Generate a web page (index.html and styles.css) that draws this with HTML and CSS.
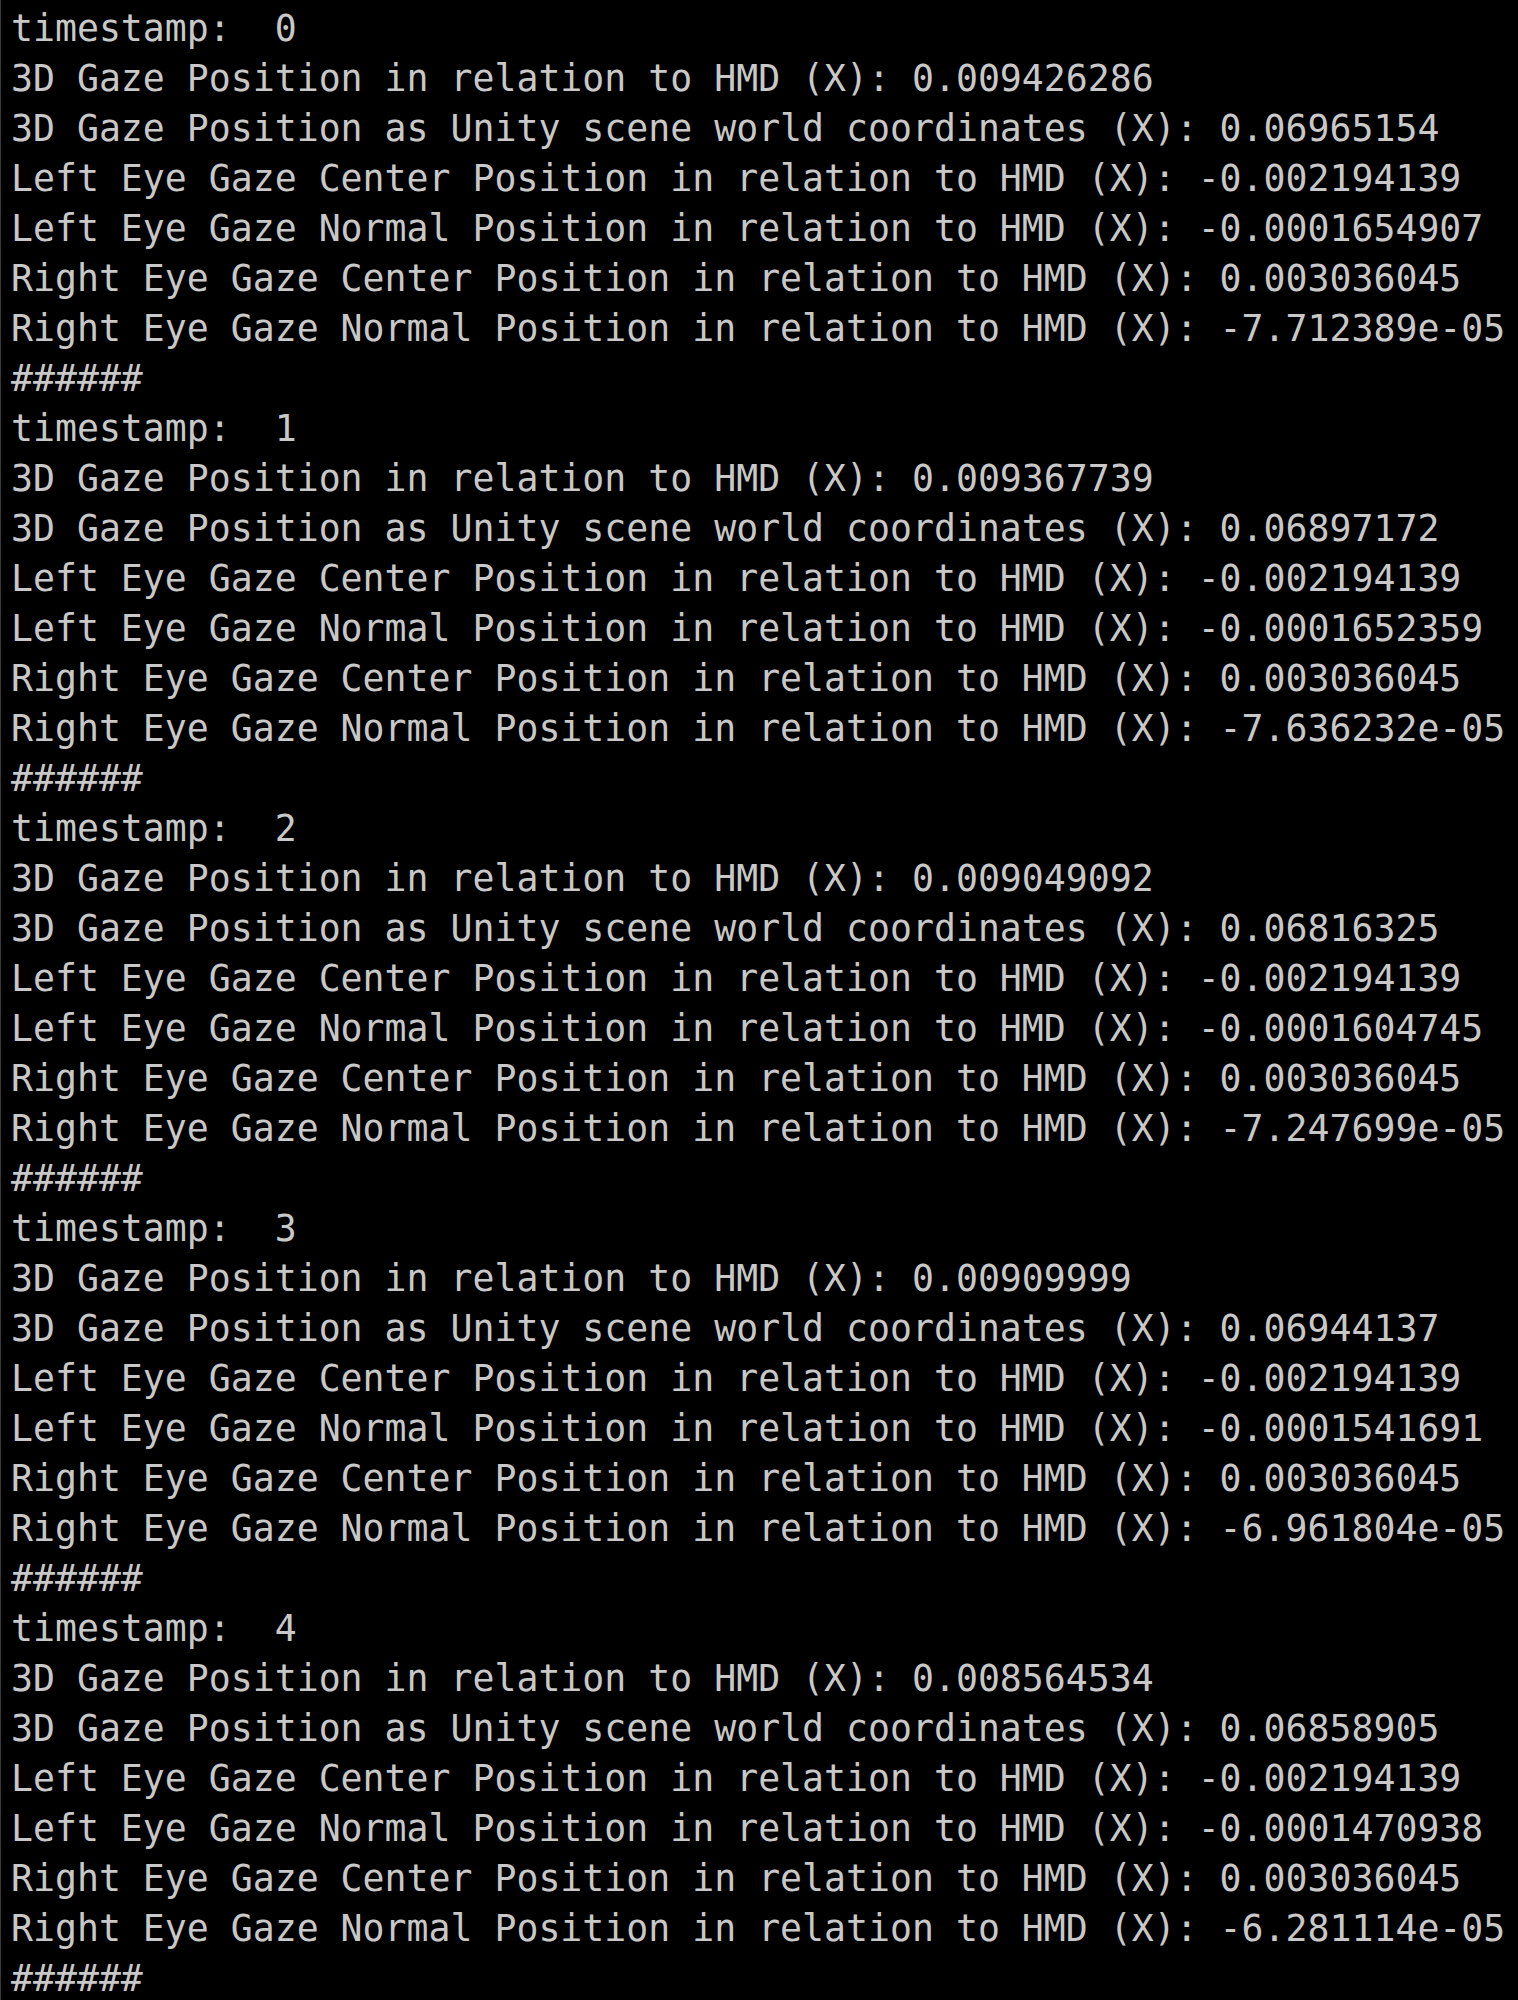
FILE: index.html
```html
<!DOCTYPE html>
<html>
<head>
<meta charset="utf-8">
<link rel="stylesheet" href="styles.css">
</head>
<body>
<div class="term">
<pre class="log">timestamp:  0
3D Gaze Position in relation to HMD (X): 0.009426286
3D Gaze Position as Unity scene world coordinates (X): 0.06965154
Left Eye Gaze Center Position in relation to HMD (X): -0.002194139
Left Eye Gaze Normal Position in relation to HMD (X): -0.0001654907
Right Eye Gaze Center Position in relation to HMD (X): 0.003036045
Right Eye Gaze Normal Position in relation to HMD (X): -7.712389e-05
######
timestamp:  1
3D Gaze Position in relation to HMD (X): 0.009367739
3D Gaze Position as Unity scene world coordinates (X): 0.06897172
Left Eye Gaze Center Position in relation to HMD (X): -0.002194139
Left Eye Gaze Normal Position in relation to HMD (X): -0.0001652359
Right Eye Gaze Center Position in relation to HMD (X): 0.003036045
Right Eye Gaze Normal Position in relation to HMD (X): -7.636232e-05
######
timestamp:  2
3D Gaze Position in relation to HMD (X): 0.009049092
3D Gaze Position as Unity scene world coordinates (X): 0.06816325
Left Eye Gaze Center Position in relation to HMD (X): -0.002194139
Left Eye Gaze Normal Position in relation to HMD (X): -0.0001604745
Right Eye Gaze Center Position in relation to HMD (X): 0.003036045
Right Eye Gaze Normal Position in relation to HMD (X): -7.247699e-05
######
timestamp:  3
3D Gaze Position in relation to HMD (X): 0.00909999
3D Gaze Position as Unity scene world coordinates (X): 0.06944137
Left Eye Gaze Center Position in relation to HMD (X): -0.002194139
Left Eye Gaze Normal Position in relation to HMD (X): -0.0001541691
Right Eye Gaze Center Position in relation to HMD (X): 0.003036045
Right Eye Gaze Normal Position in relation to HMD (X): -6.961804e-05
######
timestamp:  4
3D Gaze Position in relation to HMD (X): 0.008564534
3D Gaze Position as Unity scene world coordinates (X): 0.06858905
Left Eye Gaze Center Position in relation to HMD (X): -0.002194139
Left Eye Gaze Normal Position in relation to HMD (X): -0.0001470938
Right Eye Gaze Center Position in relation to HMD (X): 0.003036045
Right Eye Gaze Normal Position in relation to HMD (X): -6.281114e-05
######</pre>
</div>
</body>
</html>
```
FILE: styles.css
```css
html, body {
  margin: 0;
  padding: 0;
  background: #000;
}
.term {
  width: 1518px;
  height: 2000px;
  box-sizing: border-box;
  border-left: 1px solid #3a3a3a;
  background: #000;
  overflow: hidden;
  padding: 4px 0 0 10px;
}
.log {
  margin: 0;
  font-family: "DejaVu Sans Mono", monospace;
  font-size: 36.5px;
  line-height: 50px;
  color: #c8c8c8;
  white-space: pre;
}
```
